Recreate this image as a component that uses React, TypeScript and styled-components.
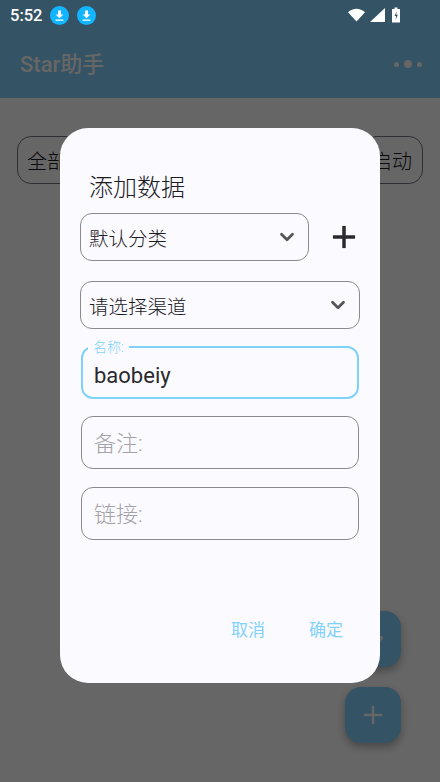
import React from 'react'
import styled, { createGlobalStyle } from 'styled-components'
import { Plus, Zap, ChevronDown } from 'lucide-react'

const FONT = `Roboto, "Noto Sans CJK SC", sans-serif`
const ACCENT = '#81d2fb'

const GlobalStyle = createGlobalStyle`
  html, body { margin: 0; padding: 0; background: #fff; }
  * { box-sizing: border-box; }
`

const Page = styled.div`
  position: relative;
  width: 440px;
  height: 782px;
  overflow: hidden;
  font-family: ${FONT};
  background: #fff;
`

const StatusBar = styled.div`
  position: relative;
  z-index: 3;
  height: 30px;
  padding: 0 0 0 10px;
  display: flex;
  align-items: center;
  background: #345364;
  color: #fff;
  font-size: 16.500px;
  font-weight: 500;
`

const Clock = styled.span`
  width: 40px;
`

const DownloadBadge = styled.svg`
  width: 19px;
  height: 19px;
  margin-right: 8px;
`

const StatusRight = styled.div`
  margin-left: auto;
  margin-right: 32px;
  display: flex;
  align-items: center;
  gap: 2px;
`

const AppBar = styled.div`
  height: 68px;
  padding: 0 20px 4px;
  display: flex;
  align-items: center;
  justify-content: space-between;
  background: #82cffa;
  color: #fff;
  font-size: 22px;
  font-weight: 500;
`

const MoreDots = styled.div`
  display: flex;
  align-items: center;
  gap: 5px;
  margin-right: -2px;
  margin-top: 4px;
`

const Dot = styled.span<{ $big?: boolean }>`
  width: ${(p) => (p.$big ? 8 : 5)}px;
  height: ${(p) => (p.$big ? 8 : 5)}px;
  border-radius: 50%;
  background: #fff;
`

const Filters = styled.div`
  padding: 38px 17px 0;
  display: flex;
  justify-content: space-between;
`

const Chip = styled.div`
  height: 48px;
  padding: 0 10px 0 9px;
  display: flex;
  align-items: center;
  border: 1px solid #79747e;
  border-radius: 14px;
  font-size: 20px;
  font-weight: 300;
  color: #1c1b1f;
`

const Fabs = styled.div`
  position: absolute;
  right: 39px;
  bottom: 39px;
  display: flex;
  flex-direction: column;
  gap: 20px;
`

const Fab = styled.div`
  width: 56px;
  height: 56px;
  border-radius: 16px;
  display: flex;
  align-items: center;
  justify-content: center;
  background: #82cffa;
  color: #fff;
  box-shadow: 0 4px 8px rgba(0, 0, 0, 0.3);
`

const Scrim = styled.div`
  position: absolute;
  inset: 0;
  z-index: 2;
  padding-top: 128px;
  display: flex;
  justify-content: center;
  align-items: flex-start;
  background: rgba(0, 0, 0, 0.6);
`

const Dialog = styled.div`
  width: 320px;
  height: 555px;
  padding: 45px 20px 0;
  display: flex;
  flex-direction: column;
  border-radius: 28px;
  background: #fbfaff;
`

const Title = styled.div`
  height: 30px;
  margin-bottom: 10px;
  padding-left: 10px;
  margin-left: -1px;
  font-size: 24px;
  font-weight: 300;
  line-height: 30px;
  color: #1c1b1f;
`

const SelectRow = styled.div<{ $gap: number }>`
  display: flex;
  align-items: center;
  margin-bottom: ${(p) => p.$gap}px;
`

const SelectBox = styled.div<{ $width: number }>`
  flex-shrink: 0;
  width: ${(p) => p.$width}px;
  height: 48px;
  padding: 0 10px 0 8px;
  display: flex;
  align-items: center;
  justify-content: space-between;
  border: 1px solid #8a898e;
  border-radius: 12px;
  font-size: 19.500px;
  font-weight: 300;
  color: #1c1b1f;
`

const AddButton = styled.div`
  flex-shrink: 0;
  margin-left: 16px;
  display: flex;
  color: #2a292d;
`

const Field = styled.div<{ $focused?: boolean; $height: number; $gap: number }>`
  position: relative;
  width: 278px;
  height: ${(p) => p.$height}px;
  margin: 0 0 ${(p) => p.$gap}px 1px;
  padding: ${(p) => (p.$focused ? '5px 11px 0' : '0 12px 3px')};
  display: flex;
  align-items: center;
  border: ${(p) => (p.$focused ? `2px solid ${ACCENT}` : '1px solid #8a898e')};
  border-radius: 12px;
  font-size: 22px;
  font-weight: ${(p) => (p.$focused ? 400 : 300)};
  color: ${(p) => (p.$focused ? '#2a292d' : '#a3a2a6')};
`

const FloatLabel = styled.span`
  position: absolute;
  top: -9px;
  left: 5px;
  padding: 0 5px;
  background: #fbfaff;
  font-size: 14px;
  font-weight: 300;
  line-height: 16px;
  color: ${ACCENT};
`

const Actions = styled.div`
  margin-top: auto;
  margin-bottom: 40px;
  margin-right: 17px;
  display: flex;
  justify-content: flex-end;
  gap: 44px;
`

const ActionButton = styled.span`
  font-size: 17px;
  font-weight: 400;
  line-height: 26px;
  color: ${ACCENT};
`

const Download = () => (
  <DownloadBadge viewBox="0 0 19 19">
    <circle cx="9.500" cy="9.500" r="9.500" fill="#12b5ff" />
    <path d="M8 4.500h3v4h2.400l-3.900 3.700-3.900-3.700H8z M5.600 13.400h7.800v1.300H5.600z" fill="#fff" />
  </DownloadBadge>
)

export default function App() {
  return (
    <Page>
      <GlobalStyle />
      <StatusBar>
        <Clock>5:52</Clock>
        <Download />
        <Download />
        <StatusRight>
          <svg width="20" height="16" viewBox="0 0 20 16">
            <path d="M1 5.200C3.400 3 6.400 1.800 9.500 1.800S15.600 3 18 5.200L9.500 14.600z" fill="#fff" />
          </svg>
          <svg width="17" height="16" viewBox="0 0 17 16">
            <path d="M16 1v14H1z" fill="#fff" />
          </svg>
          <svg width="20" height="18" viewBox="0 0 20 18">
            <path
              fillRule="evenodd"
              d="M6.500 1.500h3v1.400h2.500v13.600H4V2.900h2.500z M8.700 5.500 6.500 10h1.600l-.5 3.500 2.300-4.800H8.200z"
              fill="#fff"
            />
          </svg>
        </StatusRight>
      </StatusBar>
      <AppBar>
        <span>Star助手</span>
        <MoreDots>
          <Dot />
          <Dot $big />
          <Dot />
        </MoreDots>
      </AppBar>
      <Filters>
        <Chip>全部分类</Chip>
        <Chip>启动</Chip>
      </Filters>
      <Fabs>
        <Fab>
          <Zap size={24} strokeWidth={2} />
        </Fab>
        <Fab>
          <Plus size={28} strokeWidth={2} />
        </Fab>
      </Fabs>
      <Scrim>
        <Dialog>
          <Title>添加数据</Title>
          <SelectRow $gap={20}>
            <SelectBox $width={229}>
              默认分类
              <ChevronDown size={22} strokeWidth={3} color="#55545a" />
            </SelectBox>
            <AddButton>
              <Plus size={38} strokeWidth={2.2} strokeLinecap="butt" />
            </AddButton>
          </SelectRow>
          <SelectRow $gap={17}>
            <SelectBox $width={280}>
              请选择渠道
              <ChevronDown size={22} strokeWidth={3} color="#55545a" />
            </SelectBox>
          </SelectRow>
          <Field $focused $height={53} $gap={17}>
            <FloatLabel>名称:</FloatLabel>
            baobeiy
          </Field>
          <Field $height={53} $gap={18}>备注:</Field>
          <Field $height={53} $gap={0}>链接:</Field>
          <Actions>
            <ActionButton>取消</ActionButton>
            <ActionButton>确定</ActionButton>
          </Actions>
        </Dialog>
      </Scrim>
    </Page>
  )
}
